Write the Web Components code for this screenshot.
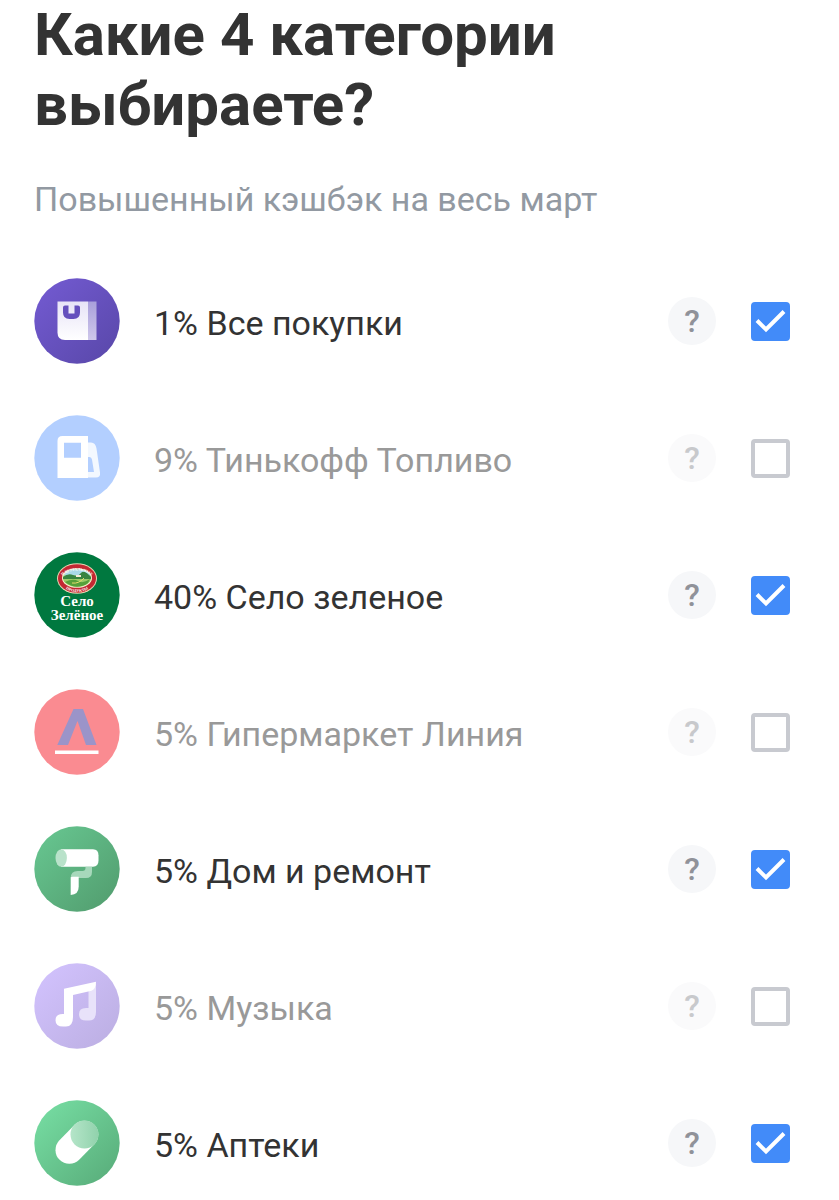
<!DOCTYPE html>
<html lang="ru">
<head>
<meta charset="utf-8">
<meta name="viewport" content="width=device-width, initial-scale=1">
<title>Категории кэшбэка</title>
<style>
  body {
    margin: 0;
    background: #fff;
    color: #333;
    font-family: Roboto, "Liberation Sans", sans-serif;
  }
</style>
</head>
<body>
<cashback-page>
  <span slot="title">Какие 4 категории выбираете?</span>
  <span slot="subtitle">Повышенный кэшбэк на весь март</span>
  <category-row icon="bag" checked>1% Все покупки</category-row>
  <category-row icon="fuel">9% Тинькофф Топливо</category-row>
  <category-row icon="selo" checked>40% Село зеленое</category-row>
  <category-row icon="line">5% Гипермаркет Линия</category-row>
  <category-row icon="roller" checked>5% Дом и ремонт</category-row>
  <category-row icon="music">5% Музыка</category-row>
  <category-row icon="pill" checked>5% Аптеки</category-row>
</cashback-page>

<script>
// Each icon: circle gradient [from, to] and the drawing on top of it
const ICONS = {
  bag: {
    fill: ['#745bd3', '#5847a8'],
    art: `
      <defs><linearGradient id="paper" x2="0" y2="1"><stop stop-color="#e7e3f7"/><stop offset="1" stop-color="#fff"/></linearGradient>
      <linearGradient id="side" x2="0" y2="1"><stop stop-color="#a99fdb"/><stop offset="1" stop-color="#cfc8eb"/></linearGradient></defs>
      <path d="M23.500 23.500H54V62H31q-7.500 0-7.500-7.500z" fill="url(#paper)"/>
      <path d="M54 23.500h8.500V62H54z" fill="url(#side)"/>
      <path d="M31 27.500h3.500v8h6v-8H44q2 0 2 2v5q0 6.500-6.500 6.500h-4Q29 41 29 34.500v-5q0-2 2-2z" fill="#6550bd"/>`
  },
  fuel: {
    fill: ['#b3cfff', '#b3cfff'],
    art: `
      <path fill-rule="evenodd" fill="#fff" d="M28.500 21H54v42H23.500V26q0-5 5-5zM30 27.700v15h17v-15z"/>
      <path fill-rule="evenodd" fill="#f3f8ff" d="M54 27.500h3q4.500 0 5.500 6L66 57.500q.7 5-4 5h-8zM54 42v15h6l-2-12.500Q57.500 42 55.500 42z"/>`
  },
  selo: {
    fill: ['#00783f', '#00783f'],
    art: `
      <defs><path id="arcTop" d="M26.500 27a17 11 0 0 1 33 0"/><path id="arcBottom" d="M25.500 26.500a17.500 13.500 0 0 0 35 0"/></defs>
      <ellipse cx="43" cy="26.500" rx="20" ry="15.300" fill="#e8d7b4"/>
      <ellipse cx="43" cy="26.500" rx="19" ry="14.300" fill="#c22832"/>
      <ellipse cx="43" cy="26" rx="15" ry="9.800" fill="#f5f0d0"/>
      <ellipse cx="43" cy="26" rx="14" ry="8.800" fill="#9bcb68"/>
      <path d="M29.500 23.500Q33 17.200 43 17.200t13.500 6.300z" fill="#a9d9e7"/>
      <path d="M29 25q5-4 10-2t8-2 10 4v2H29z" fill="#388440"/>
      <path d="M31 30q8-4 13-1t12-2l-2 4q-5 3.800-11 3.800T31 30z" fill="#55a03a"/>
      <path d="M38 31q7 1 12-5" stroke="#e6dc6c" fill="none"/>
      <path d="M42 23h5v2h-5z" fill="#f8ebd4"/>
      <g fill="#fff" text-anchor="middle" font-family="Liberation Serif, serif" font-weight="700">
        <text font-size="4"><textPath href="#arcTop" startOffset="50%">НАТУРАЛЬНЫЕ</textPath></text>
        <text font-size="4"><textPath href="#arcBottom" startOffset="50%">ПРОДУКТЫ</textPath></text>
        <text x="43" y="54" font-size="15">Село</text>
        <text x="43" y="68" font-size="15">Зелёное</text>
      </g>`
  },
  line: {
    fill: ['#fa8b91', '#fa8b91'],
    art: `
      <path d="M39.500 20h9.500l13.500 36H52l-8.500-24L34 56H23.300z" fill="#9b94c9"/>
      <path d="M21 61.500h43.500V65H21z" fill="#fff"/>`
  },
  roller: {
    fill: ['#68c892', '#519b6d'],
    art: `
      <path d="M27 23.300h32q5.500 0 5.500 6v5q0 6.500-5.500 6.500H27z" fill="#fff"/>
      <ellipse cx="27.200" cy="32" rx="5.700" ry="8.800" fill="#b9e2ca"/>
      <path d="M51.500 40.800H58V46q0 6-6 6H36.700q0-7 7-7h4.800q3 0 3-3z" fill="#a7d8bb"/>
      <path d="M36.700 51.500q.5-.8 2-.8h6v9.800q0 8-8 8.500z" fill="#fff"/>`
  },
  music: {
    fill: ['#d3c3ff', '#bbaee1'],
    art: `
      <path d="M54.500 27L62 20v29q0 8.500-7 8.500h-3q-7 0-7-6.200t7-6.300h2.500z" fill="#e8e2fa"/>
      <path d="M30 25.800l32-7q0 7-4.500 9L39 32v22q0 9.500-7 9.500h-3q-7.500 0-7.500-6.300T29 51h1z" fill="#fff"/>`
  },
  pill: {
    fill: ['#78e0a5', '#57aa78'],
    art: `
      <defs><linearGradient id="cap" x2="1" y2="0"><stop stop-color="#b5e5c9"/><stop offset="1" stop-color="#91d2ac"/></linearGradient></defs>
      <path d="M35.300 50L50.500 34.500" stroke="#fff" stroke-width="27.600" stroke-linecap="round"/>
      <circle cx="50.500" cy="34.500" r="14" fill="url(#cap)"/>`
  }
};

class CategoryIcon extends HTMLElement {
  constructor() {
    super();
    this.attachShadow({ mode: 'open' });
  }

  connectedCallback() {
    const icon = ICONS[this.getAttribute('name')];
    this.shadowRoot.innerHTML = `
      <style>
        :host { display: block; flex: none; width: 86px; height: 86px; }
        svg { display: block; width: 100%; height: 100%; }
      </style>
      <svg viewBox="0 0 86 86" aria-hidden="true">
        <defs><linearGradient id="disc" x2="1" y2="1">
          <stop stop-color="${icon.fill[0]}"/><stop offset="1" stop-color="${icon.fill[1]}"/>
        </linearGradient></defs>
        <circle cx="43" cy="43" r="42.700" fill="url(#disc)"/>
        ${icon.art}
      </svg>
    `;
  }
}

class CategoryRow extends HTMLElement {
  constructor() {
    super();
    this.attachShadow({ mode: 'open' });
  }

  connectedCallback() {
    const checked = this.hasAttribute('checked');
    this.shadowRoot.innerHTML = `
      <style>
        :host {
          display: flex;
          align-items: center;
          min-height: 86px;
        }

        label {
          flex: 1;
          margin-left: 34px;
          padding-top: 4px;
          font-size: 34px;
          line-height: 42px;
          cursor: pointer;
        }

        button {
          flex: none;
          width: 48px;
          height: 48px;
          margin-right: 35px;
          padding: 0;
          border: 0;
          border-radius: 50%;
          background: #f6f7f9;
          color: #909299;
          font: 500 32px/48px Roboto, "Liberation Sans", sans-serif;
          cursor: pointer;
        }

        .box {
          display: grid;
          flex: none;
          width: 39px;
          height: 39px;
        }

        .box > * {
          grid-area: 1 / 1;
        }

        input {
          appearance: none;
          box-sizing: border-box;
          width: 100%;
          height: 100%;
          margin: 0;
          border: 4px solid #c8cad0;
          border-radius: 4px;
          background: #fff;
          cursor: pointer;
        }

        input:checked {
          border-color: #428bf9;
          background: #428bf9;
        }

        svg {
          width: 39px;
          height: 39px;
          pointer-events: none;
          visibility: hidden;
        }

        input:checked + svg { visibility: visible; }

        :host(:not([checked])) label { color: #999; }
        :host(:not([checked])) button { background: #fafafb; color: #c8c9cc; }
      </style>
      <category-icon name="${this.getAttribute('icon')}"></category-icon>
      <label for="pick"><slot></slot></label>
      <button type="button" aria-label="Подробнее">?</button>
      <span class="box">
        <input type="checkbox" id="pick" ${checked ? 'checked' : ''}>
        <svg viewBox="0 0 39 39" aria-hidden="true">
          <path d="M6 18.500l9 9L33 9.500" fill="none" stroke="#fff" stroke-width="4"/>
        </svg>
      </span>
    `;
    this.shadowRoot.querySelector('input').addEventListener('change', (e) => {
      this.toggleAttribute('checked', e.target.checked);
    });
  }
}

class CashbackPage extends HTMLElement {
  constructor() {
    super();
    this.attachShadow({ mode: 'open' });
    this.shadowRoot.innerHTML = `
      <style>
        :host {
          display: flow-root;
          padding: 0 49px 13px 34px;
        }

        h1 {
          max-width: 600px;
          margin: 0;
          font-size: 60px;
          line-height: 70px;
          font-weight: 700;
        }

        p {
          margin: 38px 0 58px;
          color: #9299a2;
          font-size: 34px;
          line-height: 42px;
        }

        .list {
          display: flex;
          flex-direction: column;
          gap: 51px;
        }
      </style>
      <main>
        <h1><slot name="title"></slot></h1>
        <p><slot name="subtitle"></slot></p>
        <div class="list"><slot></slot></div>
      </main>
    `;
  }
}

customElements.define('category-icon', CategoryIcon);
customElements.define('category-row', CategoryRow);
customElements.define('cashback-page', CashbackPage);
</script>
</body>
</html>
